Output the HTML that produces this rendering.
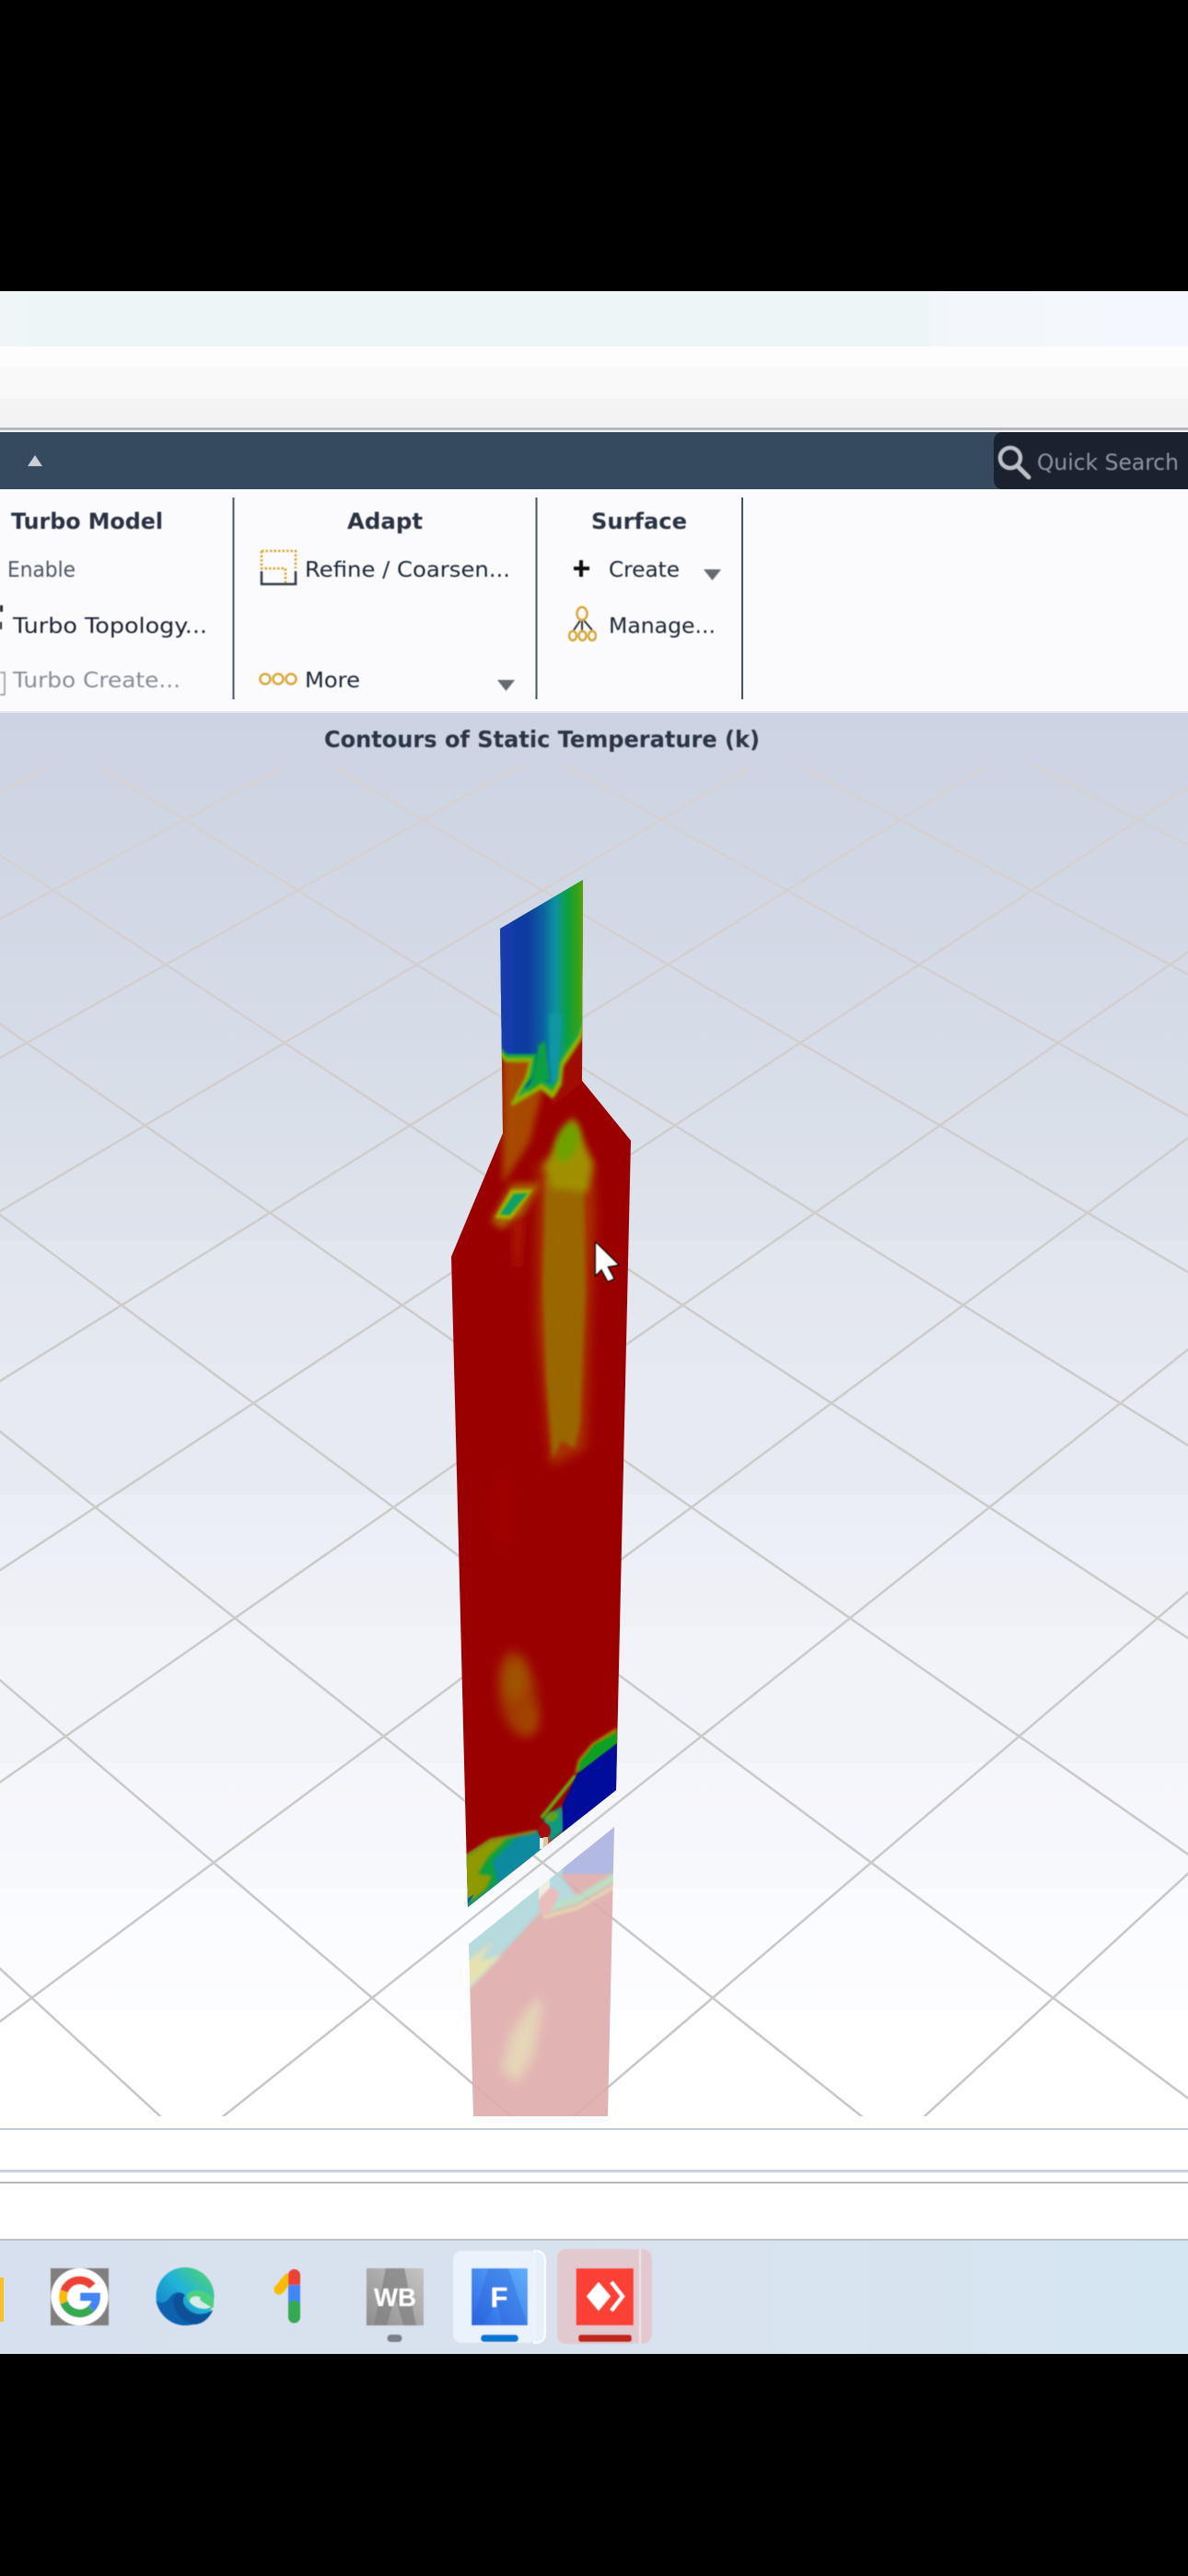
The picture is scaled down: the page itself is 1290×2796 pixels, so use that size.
<!DOCTYPE html>
<html><head><meta charset="utf-8"><title>Contours of Static Temperature</title>
<style>html,body{margin:0;padding:0;background:#000;width:1290px;height:2796px;overflow:hidden}svg{display:block}</style></head>
<body>
<svg xmlns="http://www.w3.org/2000/svg" width="1290" height="2796" viewBox="0 0 1290 2796">
<defs>
<linearGradient id="bg" gradientUnits="userSpaceOnUse" x1="0" y1="774" x2="0" y2="2297">
<stop offset="0" stop-color="#ced3e3"/><stop offset=".0696" stop-color="#ced5e3"/><stop offset=".1878" stop-color="#d4dae6"/>
<stop offset=".2817" stop-color="#d9dfe9"/><stop offset=".3762" stop-color="#dfe3ec"/><stop offset=".3762" stop-color="#e2e6ef"/>
<stop offset=".4642" stop-color="#e5e8f0"/><stop offset=".4642" stop-color="#e7eaf2"/><stop offset=".5568" stop-color="#e7eaf1"/>
<stop offset=".5568" stop-color="#ebeef6"/><stop offset=".6513" stop-color="#eff1f6"/><stop offset=".6513" stop-color="#f1f3f9"/>
<stop offset=".7479" stop-color="#f2f3f8"/><stop offset=".7479" stop-color="#f5f6fb"/><stop offset=".8378" stop-color="#f7f8fc"/>
<stop offset=".8378" stop-color="#fafbff"/><stop offset=".9245" stop-color="#fdfdff"/><stop offset=".9245" stop-color="#fff"/><stop offset="1" stop-color="#fff"/>
</linearGradient>
<linearGradient id="gl" gradientUnits="userSpaceOnUse" x1="0" y1="831" x2="0" y2="2297">
<stop offset="0" stop-color="#d5d2d2"/><stop offset=".35" stop-color="#cfcdcb"/><stop offset="1" stop-color="#c8c8c8"/>
</linearGradient>
<linearGradient id="neck" gradientUnits="userSpaceOnUse" x1="543" y1="0" x2="633" y2="0">
<stop offset="0" stop-color="#1a3cb0"/><stop offset=".33" stop-color="#083a9e"/><stop offset=".52" stop-color="#0862a2"/>
<stop offset=".67" stop-color="#0a92a0"/><stop offset=".81" stop-color="#0aa040"/><stop offset=".96" stop-color="#40a010"/><stop offset="1" stop-color="#60a010"/>
</linearGradient>
<linearGradient id="tb" x1="0" y1="0" x2="1" y2="0"><stop offset="0" stop-color="#d7e0ee"/><stop offset=".6" stop-color="#d9e3ef"/><stop offset="1" stop-color="#d4e6f2"/></linearGradient>
<linearGradient id="top" x1="0" y1="0" x2="1" y2="0"><stop offset="0" stop-color="#f0f6f8"/><stop offset=".03" stop-color="#eef5f7"/><stop offset=".78" stop-color="#eef5f7"/><stop offset=".8" stop-color="#f3f7fc"/><stop offset="1" stop-color="#f4f7fd"/></linearGradient>
<linearGradient id="edgeg" x1="0" y1="1" x2="1" y2="0"><stop offset="0" stop-color="#0f6fc0"/><stop offset=".55" stop-color="#22b4d8"/><stop offset="1" stop-color="#58d860"/></linearGradient>
<linearGradient id="fg" x1="0" y1="1" x2="1" y2="0"><stop offset="0" stop-color="#2a66e4"/><stop offset="1" stop-color="#5fb0fb"/></linearGradient>
<linearGradient id="wbg" x1="0" y1="1" x2="1" y2="0"><stop offset="0" stop-color="#8e8e8e"/><stop offset="1" stop-color="#c4c4c4"/></linearGradient>
<filter id="b05" x="-5%" y="-20%" width="110%" height="140%"><feGaussianBlur stdDeviation=".45"/></filter>
<filter id="b1" x="-20%" y="-20%" width="140%" height="140%"><feGaussianBlur stdDeviation="1"/></filter>
<filter id="b15" x="-20%" y="-20%" width="140%" height="140%"><feGaussianBlur stdDeviation="1.500"/></filter>
<filter id="b2" x="-30%" y="-30%" width="160%" height="160%"><feGaussianBlur stdDeviation="2.500"/></filter>
<filter id="b4" x="-40%" y="-40%" width="180%" height="180%"><feGaussianBlur stdDeviation="4"/></filter>
<filter id="b6" x="-50%" y="-50%" width="200%" height="200%"><feGaussianBlur stdDeviation="6"/></filter>
<clipPath id="vp"><rect x="0" y="831" width="1290" height="1466"/></clipPath>
<clipPath id="plate"><polygon points="633,955 543,1008 546,1230 490,1364 508,2070 669,1943 685,1238 632,1173"/></clipPath>
<clipPath id="refl"><polygon points="667,1983 509,2110 514,2297 660,2297"/></clipPath>
</defs>

<rect width="1290" height="2796" fill="#000"/>

<!-- top bands -->
<rect x="0" y="316" width="1290" height="60" fill="url(#top)"/>
<rect x="0" y="376" width="1290" height="21" fill="#fdfdfe"/>
<rect x="0" y="397" width="1290" height="36" fill="#f9f9fa"/>
<rect x="0" y="433" width="1290" height="31" fill="#f3f3f4"/>
<rect x="0" y="464" width="1290" height="3" fill="#b9b9bb"/>
<rect x="0" y="467" width="1290" height="2" fill="#f4f4f6"/>

<!-- title bar -->
<rect x="0" y="469" width="1290" height="62" fill="#35495f"/>
<path d="M1090 469H1290V531H1090Q1079 531 1079 520V480Q1079 469 1090 469Z" fill="#19222e"/>
<polygon points="38,494 46,506 30,506" fill="#c9ced4"/>
<g filter="url(#b05)">
<circle cx="1097" cy="497" r="11" fill="none" stroke="#bcc1c8" stroke-width="4.500"/>
<path d="M1105 506L1117 518" stroke="#bcc1c8" stroke-width="5" stroke-linecap="round"/>
<text x="1126" y="510" font-family="'DejaVu Sans',sans-serif" font-size="24" fill="#8e959f" textLength="154" lengthAdjust="spacingAndGlyphs">Quick Search</text>
</g>

<!-- ribbon -->
<rect x="0" y="531" width="1290" height="243" fill="#fbfbfe"/>
<rect x="0" y="772" width="1290" height="2" fill="#e3e5ec"/>
<g fill="#4a5361">
<rect x="252.500" y="540" width="2" height="219"/><rect x="581.500" y="540" width="2" height="219"/><rect x="805" y="540" width="2" height="219"/>
</g>
<g filter="url(#b05)" font-family="'DejaVu Sans',sans-serif" font-size="23">
<g font-weight="700" font-size="24" fill="#2a3342">
<text x="12" y="574" textLength="165" lengthAdjust="spacingAndGlyphs">Turbo Model</text>
<text x="377" y="574" textLength="82" lengthAdjust="spacingAndGlyphs">Adapt</text>
<text x="642" y="574" textLength="104" lengthAdjust="spacingAndGlyphs">Surface</text>
</g>
<text x="8" y="626" fill="#4d5566" textLength="74" lengthAdjust="spacingAndGlyphs">Enable</text>
<text x="331" y="626" fill="#1d2535" textLength="223" lengthAdjust="spacingAndGlyphs">Refine / Coarsen...</text>
<text x="661" y="626" fill="#1d2535" textLength="77" lengthAdjust="spacingAndGlyphs">Create</text>
<text x="14" y="687" fill="#1d2030" textLength="211" lengthAdjust="spacingAndGlyphs">Turbo Topology...</text>
<text x="661" y="687" fill="#1d2535" textLength="116" lengthAdjust="spacingAndGlyphs">Manage...</text>
<text x="14" y="746" fill="#8a8d96" textLength="182" lengthAdjust="spacingAndGlyphs">Turbo Create...</text>
<text x="331" y="746" fill="#1d2535" textLength="60" lengthAdjust="spacingAndGlyphs">More</text>
</g>
<g filter="url(#b05)">
<path d="M631 608V626M623 617H640" stroke="#111" stroke-width="4" fill="none"/>
<polygon points="764,618 783,618 773.500,630" fill="#666b72"/>
<polygon points="540,738 559,738 549.500,750" fill="#666b72"/>
<path d="M284 598H321V617M284 598V617H310V634" fill="none" stroke="#d9a62e" stroke-width="2.500" stroke-dasharray="2.500 2"/>
<path d="M284 620V634H321V620" fill="none" stroke="#333a45" stroke-width="2.500"/>
<g fill="none" stroke="#d9a93a" stroke-width="2.500"><circle cx="288" cy="737" r="5.500"/><circle cx="302" cy="737" r="5.500"/><circle cx="316" cy="737" r="5.500"/></g>
<path d="M631 672L623 684M632 672V684M633 672L643 684" fill="none" stroke="#333" stroke-width="2"/>
<g fill="none" stroke="#d9a93a" stroke-width="2.500"><ellipse cx="632" cy="666" rx="5.500" ry="7"/><ellipse cx="622" cy="690" rx="4" ry="5"/><ellipse cx="632.500" cy="690" rx="4" ry="5"/><ellipse cx="643" cy="690" rx="4" ry="5"/></g>
<path d="M0 657H3V664H0ZM0 675H2V683H0Z" fill="#222"/>
<path d="M0 730H5V754H0" fill="none" stroke="#aaa" stroke-width="2"/>
</g>

<!-- viewport -->
<rect x="0" y="774" width="1290" height="1523" fill="url(#bg)"/>
<text x="352" y="811" font-family="'DejaVu Sans',sans-serif" font-size="25" font-weight="700" fill="#2b3445" textLength="473" lengthAdjust="spacingAndGlyphs" filter="url(#b05)">Contours of Static Temperature (k)</text>

<g clip-path="url(#vp)" stroke="url(#gl)" stroke-width="2.600" fill="none">
<path d="M1347.100 817L4768 2496M1094.400 817L4370 2496M841.700 817L3972 2496M589 817L3574 2496M336.300 817L3176 2496M83.600 817L2778 2496M-169.100 817L2380 2496M-421.800 817L1982 2496M-674.500 817L1584 2496M-927.200 817L1186 2496M-1179.900 817L788 2496M-1432.600 817L390 2496"/>
<path d="M-169.100 817L-3590 2496M83.600 817L-3192 2496M336.300 817L-2794 2496M589 817L-2396 2496M841.700 817L-1998 2496M1094.400 817L-1600 2496M1347.100 817L-1202 2496M1599.800 817L-804 2496M1852.500 817L-406 2496M2105.200 817L-8 2496M2357.900 817L390 2496M2610.600 817L788 2496M2863.300 817L1186 2496"/>
</g>

<!-- reflection -->
<g clip-path="url(#refl)" opacity=".9">
<rect x="500" y="1975" width="175" height="330" fill="#deabab"/>
<polygon points="670,1980 610,2026 608,2034 670,2034" fill="#aab2df" filter="url(#b05)"/>
<polygon points="505,2108 612,2022 610,2036 627,2060 590,2072 510,2158" fill="#aed6da" filter="url(#b15)"/>
<polygon points="505,2130 535,2108 522,2128 545,2122 505,2162" fill="#e4dfa8" filter="url(#b2)"/>
<path d="M670 2036L627 2062L588 2074" fill="none" stroke="#b3e0c0" stroke-width="8" filter="url(#b2)"/>
<path d="M670 2046L627 2071L590 2081" fill="none" stroke="#e6dcaa" stroke-width="3" filter="url(#b15)"/>
<polygon points="580,2172 590,2170 580,2230 562,2262 544,2245 556,2205" fill="#e4d2b0" filter="url(#b6)"/>
<rect x="585" y="2040" width="12" height="22" fill="#f0ece0" filter="url(#b05)"/>
<polygon points="586,2060 598,2048 608,2055 596,2078 585,2075" fill="#e8b6b6" filter="url(#b1)"/>
</g>

<!-- plate -->
<g clip-path="url(#plate)">
<rect x="480" y="945" width="215" height="1135" fill="#9b0000"/>
<!-- neck lower -->
<polygon points="546,1140 580,1145 590,1180 575,1240 546,1285" fill="#a84800" filter="url(#b4)"/>
<polygon points="575,1150 632,1100 632,1175 600,1200" fill="#a01000" filter="url(#b1)"/>
<!-- neck upper -->
<path d="M540 950H636V1097L630 1127L610 1157L608 1177L600 1190L587 1180L557 1198L572 1170L577 1151H550L540 1140Z" fill="#8fb000" stroke="#8fb000" stroke-width="4" stroke-linejoin="round" filter="url(#b15)"/>
<path d="M540 950H636V1095L628 1124L607 1155L605 1173L600 1184L587 1175L562 1191L575 1168L579 1148H550L540 1136Z" fill="#12a848" filter="url(#b1)"/>
<path d="M540 950H636V1092L626 1122L604 1153L602 1170L600 1178L587 1170L569 1182L580 1166L583 1144H550L540 1132Z" fill="url(#neck)" filter="url(#b1)"/>
<polygon points="585,1134 592,1130 597,1172 589,1174 572,1186 580,1162" fill="#10a040" filter="url(#b15)"/>
<polygon points="596,1100 610,1100 606,1170 600,1178 597,1150" fill="#0a98a4" filter="url(#b2)"/>
<!-- column -->
<polygon points="584,1262 644,1262 646,1320 640,1460 636,1572 598,1592 583,1440" fill="#a83000" filter="url(#b6)"/>
<polygon points="592,1278 634,1278 636,1400 630,1545 624,1572 610,1564 600,1584 593,1500 589,1400" fill="#9a6600" filter="url(#b2)"/>
<polygon points="622,1212 644,1262 638,1294 600,1290 590,1266" fill="#a09000" filter="url(#b4)"/>
<ellipse cx="616" cy="1240" rx="12" ry="22" transform="rotate(18 616 1240)" fill="#6ea204" filter="url(#b4)"/>
<!-- small pod -->
<polygon points="555,1285 588,1284 566,1322 545,1334 533,1326" fill="#a86000" filter="url(#b4)"/>
<polygon points="555,1291 579,1291 555,1324 537,1322" fill="#a4b000" filter="url(#b15)"/>
<polygon points="558,1296 573,1295 553,1319 543,1318" fill="#08a068" filter="url(#b1)"/>
<polygon points="555,1325 570,1325 565,1375 558,1375" fill="#a81500" filter="url(#b4)"/>
<ellipse cx="545" cy="1640" rx="14" ry="40" fill="#9f0600" filter="url(#b4)"/>
<!-- lower blob -->
<ellipse cx="562" cy="1838" rx="20" ry="46" transform="rotate(-8 562 1838)" fill="#a03a00" filter="url(#b6)"/>
<ellipse cx="560" cy="1825" rx="11" ry="22" fill="#a05400" filter="url(#b6)"/>
<ellipse cx="574" cy="1866" rx="10" ry="18" fill="#a24400" filter="url(#b6)"/>
<!-- bottom right -->
<polygon points="670,1875 643,1892 628,1910 624,1926 670,1896" fill="#a08a00" filter="url(#b15)"/>
<polygon points="670,1880 645,1894 630,1912 627,1926 670,1894" fill="#08a020" filter="url(#b1)"/>
<path d="M625 1927L588 1973" stroke="#6aa810" stroke-width="4" filter="url(#b1)"/>
<polygon points="590,1973 610,1960 615,1985 597,2000" fill="#0a9a80" filter="url(#b15)"/>
<ellipse cx="599" cy="1972" rx="8" ry="5" transform="rotate(-30 599 1972)" fill="#60a020" filter="url(#b1)"/>
<polygon points="670,1892 627,1925 611,1958 611,1995 670,1950" fill="#00109a" filter="url(#b05)"/>
<!-- bottom left -->
<polygon points="505,2014 533,1997 560,1992 585,1986 592,2010 505,2075" fill="#0a8aa0" filter="url(#b1)"/>
<polygon points="505,2016 533,1998 562,1993 535,2020 540,2044 516,2062 505,2072" fill="#10a040" filter="url(#b15)"/>
<polygon points="505,2016 533,1998 552,1994 530,2016 519,2034 534,2036 528,2050 516,2060 505,2066" fill="#8f9a00" filter="url(#b15)"/>
<path d="M505 2016L533 1997L582 1988" fill="none" stroke="#a88000" stroke-width="3" filter="url(#b15)"/>
<polygon points="505,2062 515,2056 505,2072" fill="#0a60b0"/>
<ellipse cx="591" cy="1987" rx="7" ry="8" fill="#a50a10" filter="url(#b05)"/>
<rect x="586" y="1995" width="6" height="12" fill="#e8f0f0"/><rect x="590" y="1994" width="6" height="12" fill="#d8c8a0"/><rect x="595" y="1993" width="2" height="10" fill="#d04040"/>
</g>

<!-- cursor -->
<path d="M646.500 1348V1385L653 1378L660 1391L667 1388L660 1375L672 1373Z" fill="#fff" stroke="#111" stroke-width="1.500" stroke-linejoin="round" filter="url(#b05)"/>

<!-- bottom panels -->
<rect x="0" y="2297" width="1290" height="134" fill="#fff"/>
<rect x="0" y="2310" width="1290" height="2" fill="#c7cad9"/>
<rect x="0" y="2355" width="1290" height="3" fill="#c8d0de"/>
<rect x="0" y="2368" width="1290" height="2" fill="#b6b6ba"/>
<rect x="0" y="2430" width="1290" height="2" fill="#bdc0c4"/>

<!-- taskbar -->
<rect x="0" y="2432" width="1290" height="123" fill="url(#tb)"/>
<rect x="0" y="2472" width="4" height="48" fill="#fbbf24"/>
<g filter="url(#b05)">
<!-- google -->
<rect x="55" y="2462" width="63" height="62" fill="#7f7f7f"/>
<circle cx="86.500" cy="2493" r="31" fill="#fff"/>
<g fill="none" stroke-width="9">
<path d="M100.300 2481.400A18 18 0 0 0 69.600 2486.800" stroke="#ea4335"/>
<path d="M69.600 2486.800A18 18 0 0 0 69.600 2499.200" stroke="#fbbc05"/>
<path d="M69.600 2499.200A18 18 0 0 0 99.200 2505.700" stroke="#34a853"/>
<path d="M99.200 2505.700A18 18 0 0 0 104.500 2493H87" stroke="#4285f4"/>
</g>
<!-- edge -->
<ellipse cx="201" cy="2492.500" rx="31.500" ry="31.500" fill="url(#edgeg)"/>
<path d="M169.500 2497C172 2512 186 2524 201 2524C216 2524 226 2517 231 2507C224 2512 214 2513 208 2509C200 2504 196 2497 201 2491C195 2486 188 2488 184 2494C180 2500 174 2501 169.500 2497Z" fill="#0f62b0"/>
<path d="M188 2496C187 2508 198 2522 212 2523C221 2522 227 2516 231 2508C224 2513 214 2514 208 2510C200 2506 196 2498 201 2491C195 2488 190 2489 188 2496Z" fill="#0e5199"/>
<path d="M204 2489C210 2484 222 2484 232 2494V2504C226 2508 216 2506 211 2503C205 2500 201 2494 204 2489Z" fill="#4ccf80"/>
<path d="M206 2498C206 2492 214 2491 218 2494C214 2496 222 2500 229 2504C222 2508 210 2505 206 2498Z" fill="#d4ecec"/>
<!-- google one -->
<path d="M313 2473L303 2485" stroke="#fbbc04" stroke-width="11" stroke-linecap="round"/>
<path d="M319.500 2469.500V2478" stroke="#ea4335" stroke-width="13" stroke-linecap="round"/>
<rect x="313" y="2480" width="13" height="23" fill="#4285f4"/>
<path d="M319.500 2503V2515" stroke="#34a853" stroke-width="13" stroke-linecap="round"/>
<rect x="313" y="2503" width="13" height="4" fill="#34a853"/>
<!-- WB -->
<rect x="398" y="2462" width="62" height="62" fill="url(#wbg)"/>
<path d="M419 2462H439L452 2524H438L429 2492L420 2524H406Z" fill="#808082" opacity=".7"/>
<text x="429" y="2503" text-anchor="middle" font-family="'Liberation Sans',sans-serif" font-weight="700" font-size="28" fill="#fff" textLength="46" lengthAdjust="spacingAndGlyphs">WB</text>
<rect x="420.500" y="2534" width="16" height="8" rx="4" fill="#7a818b"/>
<!-- fluent -->
<path d="M580 2443Q592 2443 592 2455V2531Q592 2543 580 2543Z" fill="#e6f0fa" stroke="#fff" stroke-width="2"/>
<rect x="492" y="2443" width="91" height="100" rx="9" fill="#eaf2fb"/>
<rect x="512" y="2462" width="61" height="62" fill="url(#fg)"/>
<path d="M530 2462H552L573 2524H545L540 2498L525 2524H512Z" fill="#2a62d8" opacity=".35"/>
<text x="542" y="2504" text-anchor="middle" font-family="'Liberation Sans',sans-serif" font-weight="700" font-size="31" fill="#fff">F</text>
<rect x="522" y="2534" width="41" height="8" rx="4" fill="#0078d4"/>
<!-- anydesk -->
<path d="M690 2441H696Q708 2441 708 2453V2532Q708 2544 696 2544H690Z" fill="#e2c9cf"/>
<rect x="605" y="2441" width="89" height="103" rx="9" fill="#e2c9cf"/>
<rect x="694" y="2441" width="2" height="103" fill="#f0e4ea"/>
<rect x="625.500" y="2462" width="62.500" height="62" fill="#fb4136"/>
<polygon points="650,2477 663,2492.500 650,2508 637,2492.500" fill="#fff"/>
<path d="M664 2477L676 2492.500L664 2508" fill="none" stroke="#fff" stroke-width="4"/>
<rect x="628" y="2534" width="58" height="8" rx="3" fill="#c0281c"/>
</g>
<rect x="0" y="2555" width="1290" height="241" fill="#000"/>
</svg>
</body></html>
